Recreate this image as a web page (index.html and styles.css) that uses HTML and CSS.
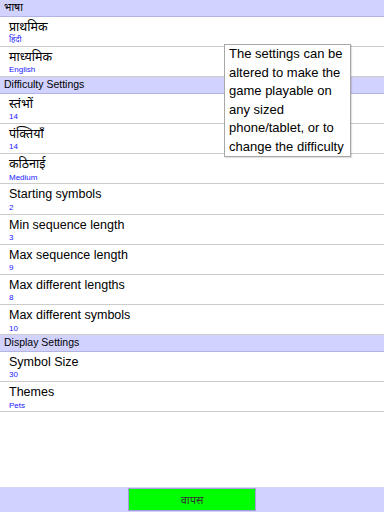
FILE: index.html
```html
<!DOCTYPE html>
<html>
<head>
<meta charset="utf-8">
<link rel="stylesheet" href="styles.css">
</head>
<body>
<div class="page">
  <div class="list">
    <div class="section">भाषा</div>
    <div class="row"><div class="title">प्राथमिक</div><div class="sub">हिंदी</div></div>
    <div class="row"><div class="title">माध्यमिक</div><div class="sub">English</div></div>
    <div class="section">Difficulty Settings</div>
    <div class="row"><div class="title">स्तंभों</div><div class="sub">14</div></div>
    <div class="row"><div class="title">पंक्तियाँ</div><div class="sub">14</div></div>
    <div class="row"><div class="title">कठिनाई</div><div class="sub">Medium</div></div>
    <div class="row"><div class="title">Starting symbols</div><div class="sub">2</div></div>
    <div class="row"><div class="title">Min sequence length</div><div class="sub">3</div></div>
    <div class="row"><div class="title">Max sequence length</div><div class="sub">9</div></div>
    <div class="row"><div class="title">Max different lengths</div><div class="sub">8</div></div>
    <div class="row"><div class="title">Max different symbols</div><div class="sub">10</div></div>
    <div class="section">Display Settings</div>
    <div class="row"><div class="title">Symbol Size</div><div class="sub">30</div></div>
    <div class="row"><div class="title">Themes</div><div class="sub">Pets</div></div>
  </div>
  <div class="bottombar">
    <button class="back">वापस</button>
  </div>
  <div class="tooltip">The settings can be altered to make the game playable on any sized phone/tablet, or to change the difficulty</div>
</div>
</body>
</html>
```
FILE: styles.css
```css
html, body {
  margin: 0;
  padding: 0;
  background: #ffffff;
}
body {
  font-family: "Liberation Sans", "Noto Sans", Arial, sans-serif;
}
.page {
  position: relative;
  width: 384px;
  height: 512px;
  display: flex;
  flex-direction: column;
  overflow: hidden;
}
.list {
  flex: 1;
  display: flex;
  flex-direction: column;
}
.section {
  height: 15.7px;
  box-sizing: content-box;
  background: #d2d2ff;
  border-bottom: 1px solid #b4b4e4;
  font-size: 10.5px;
  line-height: 14px;
  padding-left: 4px;
  color: #000;
}
.row {
  height: 26.2px;
  border-bottom: 1px solid #cccccc;
  padding-left: 9px;
  padding-top: 3px;
  box-sizing: content-box;
}
.title {
  font-size: 12.5px;
  line-height: 15px;
  color: #000;
}
.sub {
  font-size: 8px;
  line-height: 10px;
  margin-top: 0.5px;
  color: #2020ff;
}
.bottombar {
  height: 25px;
  background: #d2d2ff;
  display: flex;
  justify-content: center;
  align-items: center;
}
.back {
  width: 128px;
  height: 23px;
  margin: 0;
  padding: 0;
  background: #00ff00;
  border: 1px solid #a89ce0;
  font-family: "Liberation Sans", "Noto Sans", sans-serif;
  font-size: 11px;
  color: #333;
}
.tooltip {
  position: absolute;
  left: 224px;
  top: 44px;
  width: 118px;
  height: 111px;
  padding: 0 3px 0 4px;
  background: #fff;
  border: 1px solid #a8a8a8;
  box-shadow: 1px 1px 1px rgba(0,0,0,0.12);
  font-size: 13px;
  line-height: 18.6px;
  color: #000;
}
```
